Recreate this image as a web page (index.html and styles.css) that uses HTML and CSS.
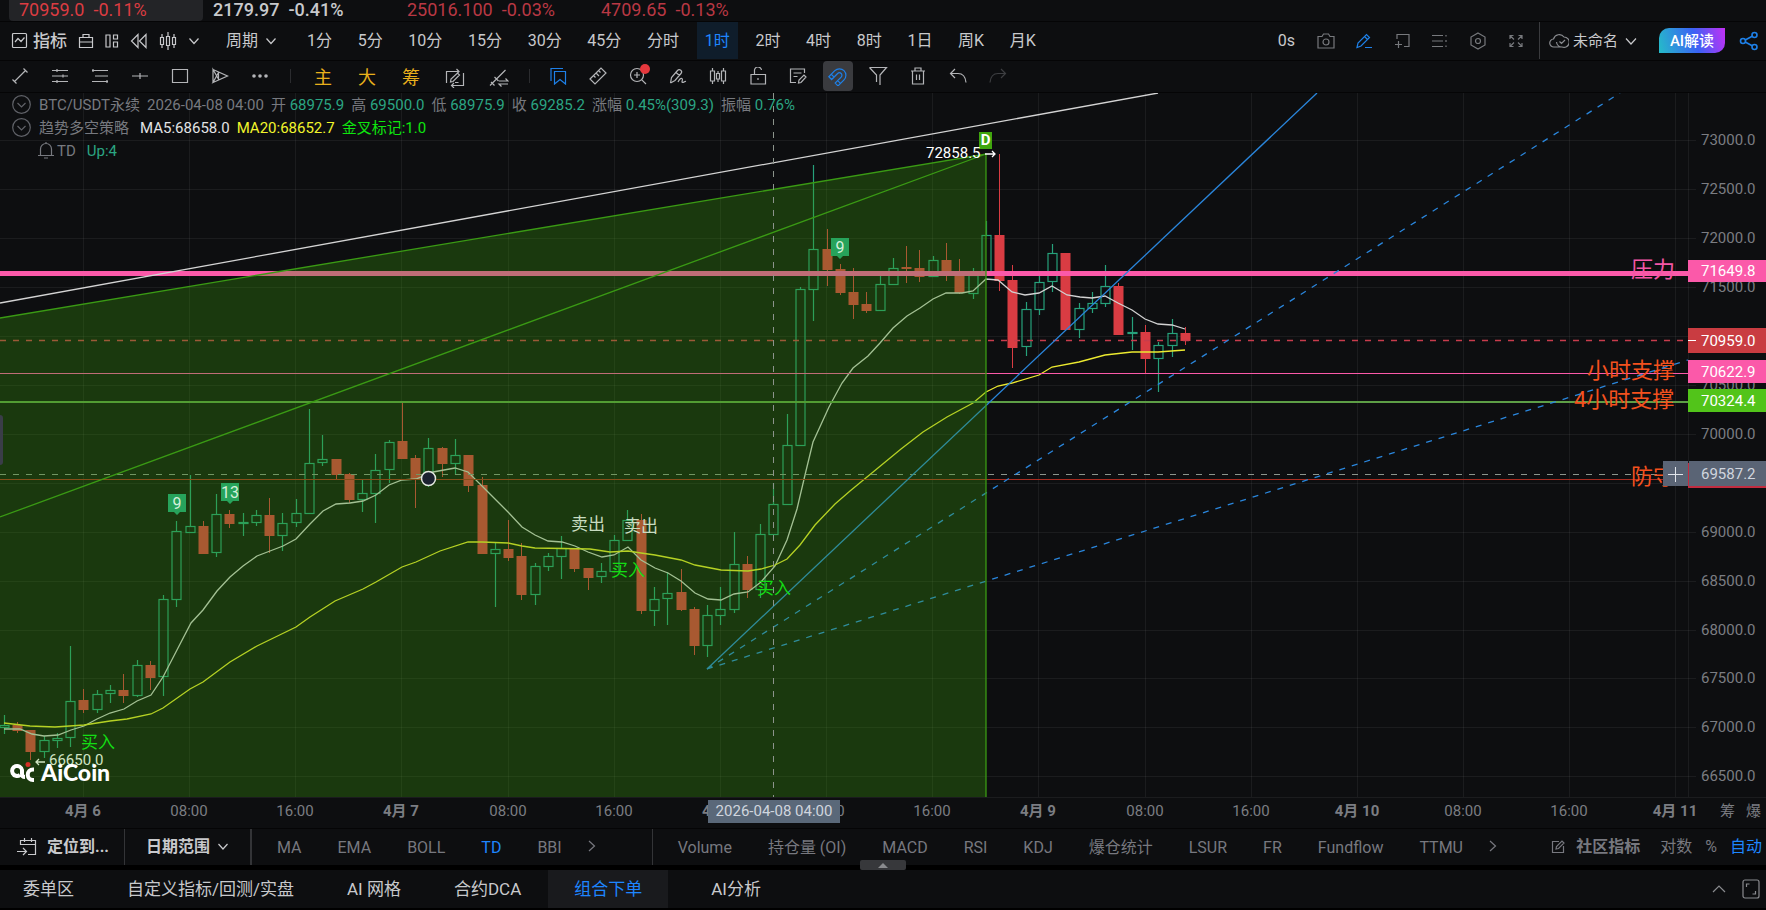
FILE: index.html
```html
<!DOCTYPE html>
<html lang="zh-CN">
<head>
    <meta charset="UTF-8">
    <meta name="viewport" content="width=device-width, initial-scale=1.0">
    <title>AiCoin - BTC/USDT永续</title>
    <link rel="stylesheet" href="styles.css">
</head>
<body>
    <header class="ticker">
        <a class="tick active down" href="#"><span>70959.0</span><span>-0.11%</span></a>
        <a class="tick flat" href="#"><span>2179.97</span><span>-0.41%</span></a>
        <a class="tick dim" href="#"><span>25016.100</span><span>-0.03%</span></a>
        <a class="tick dim" href="#"><span>4709.65</span><span>-0.13%</span></a>
    </header>

    <nav class="period-bar">
        <div class="tools">
            <button class="indicator-btn">
                <svg class="icon" width="17" height="17" viewBox="0 0 17 17"><rect x="1.500" y="1.500" width="14" height="14" rx="1"/><path d="M4 10l3-3.500 3 3 3.500-4"/></svg>
                指标
            </button>
            <button aria-label="工具箱"><svg class="icon" width="16" height="16" viewBox="0 0 16 16"><path d="M1.500 4.500h13v10h-13zM1.500 9h13M5 4.500v-3h6v3"/></svg></button>
            <button aria-label="布局"><svg class="icon" width="14" height="16" viewBox="0 0 14 16"><path d="M1 2h4v12H1zM8.500 2h4v4h-4zM8.500 9h4v5h-4z"/></svg></button>
            <button aria-label="回放"><svg class="icon" width="18" height="16" viewBox="0 0 18 16"><path d="M8 1.500v13L1.500 8zM16 1.500v13L9.500 8z"/></svg></button>
            <button aria-label="K线样式"><svg class="icon" width="18" height="18" viewBox="0 0 18 18"><path d="M3 2v3M3 13v3M1.500 5.500h3v7h-3zM9 0v4M9 14v4M7.500 4.500h3v9h-3zM15 2v3M15 13v3M13.500 5.500h3v7h-3z"/></svg></button>
            <button aria-label="展开"><svg class="icon" width="12" height="12" viewBox="0 0 12 12"><path d="M1.500 3.500L6 8.500l4.500-5"/></svg></button>
        </div>
        <label class="drop">
            <select aria-label="周期"><option>周期</option></select>
            <svg class="icon" width="12" height="12" viewBox="0 0 12 12"><path d="M1.500 3.500L6 8.500l4.500-5"/></svg>
        </label>
        <div class="periods">
            <button>1分</button>
            <button>5分</button>
            <button>10分</button>
            <button>15分</button>
            <button>30分</button>
            <button>45分</button>
            <button>分时</button>
            <button class="active">1时</button>
            <button>2时</button>
            <button>4时</button>
            <button>8时</button>
            <button>1日</button>
            <button>周K</button>
            <button>月K</button>
        </div>
        <div class="actions">
            <button class="delay">0s</button>
            <button aria-label="截图"><svg class="icon" width="18" height="18" viewBox="0 0 18 18"><path d="M1 4.500h4l1.500-2.500h5L13 4.500h4V16H1z"/><circle cx="9" cy="10" r="3"/></svg></button>
            <button class="blue" aria-label="画线"><svg class="icon" width="18" height="18" viewBox="0 0 18 18"><path d="M2 15.500l1-4.500 8.500-8.500 3 3L6 14zM9.500 4.500l3 3M10 15.500h7"/></svg></button>
            <button aria-label="新增窗口"><svg class="icon" width="18" height="18" viewBox="0 0 18 18"><path d="M4 7V2.500h12v12h-5M5.500 9v7M2 12.500h7"/></svg></button>
            <button aria-label="列表"><svg class="icon" width="18" height="18" viewBox="0 0 18 18"><path d="M1 3.500h11M1 9h11M1 14.500h11M15 3v1.500M15 8v2M15 13.500V15"/></svg></button>
            <button aria-label="设置"><svg class="icon" width="18" height="18" viewBox="0 0 18 18"><path d="M9 1l7 4v8l-7 4-7-4V5z"/><circle cx="9" cy="9" r="2.500"/></svg></button>
            <button aria-label="全屏"><svg class="icon" width="18" height="18" viewBox="0 0 18 18"><path d="M3 7V3.500h3.500M3.500 4L7 7.500M11.500 3.500H15V7M14.500 4L11 7.500M3 11v3.500h3.500M3.500 14L7 10.500M11.500 14.500H15V11M14.500 14L11 10.500"/></svg></button>
        </div>
        <div class="account">
            <svg class="icon cloud" width="20" height="16" viewBox="0 0 20 16"><path d="M7.500 14H5a4 4 0 0 1-.5-8 6 6 0 0 1 10.500-2A5.200 5.200 0 1 1 13 14zM13 14a5.500 5.500 0 0 1-5.500-5M10.500 8.500l2 2L16 7"/></svg>
            <label class="drop layout-name">
                <select aria-label="布局名称"><option>未命名</option></select>
                <svg class="icon" width="12" height="12" viewBox="0 0 12 12"><path d="M1 3.500L6 9l5-5.500"/></svg>
            </label>
            <button class="ai-btn">AI解读</button>
            <button class="blue" aria-label="分享"><svg class="icon share" width="20" height="20" viewBox="0 0 20 20"><circle cx="4" cy="10" r="2.500"/><circle cx="15.500" cy="4" r="2.500"/><circle cx="15.500" cy="16" r="2.500"/><path d="M6.200 9l7-3.800M6.200 11l7 3.800"/></svg></button>
        </div>
    </nav>

    <nav class="draw-bar">
        <button aria-label="线段"><svg class="icon" width="18" height="18" viewBox="0 0 18 18"><path d="M3.500 14.500l11-11M1.500 12.500l4 4M12.500 1.500l4 4"/></svg></button>
        <button aria-label="平行线"><svg class="icon" width="18" height="18" viewBox="0 0 18 18"><path d="M1 3.500h16M1 9h16M1 14.500h16M6 2v3M12 7.500v3M6 13v3"/></svg></button>
        <button aria-label="斐波那契"><svg class="icon" width="18" height="18" viewBox="0 0 18 18"><path d="M1 3.500h16M4 9h13M1 14.500h16M2 2v3M16 13v3"/></svg></button>
        <button aria-label="水平线"><svg class="icon" width="18" height="18" viewBox="0 0 18 18"><path d="M1 9h16M9 6v6"/></svg></button>
        <button aria-label="矩形"><svg class="icon" width="18" height="18" viewBox="0 0 18 18"><path d="M1.500 2.500h15v13h-15z"/></svg></button>
        <button aria-label="形态"><svg class="icon" width="18" height="18" viewBox="0 0 18 18"><path d="M2 15.500V2.500L8 13M2 2.500L16.500 9 2 15.500 7.500 5.500V13"/></svg></button>
        <button aria-label="更多"><svg class="icon solid" width="18" height="18" viewBox="0 0 18 18"><circle cx="3" cy="9" r="1.800"/><circle cx="9" cy="9" r="1.800"/><circle cx="15" cy="9" r="1.800"/></svg></button>
        <span class="sep"></span>
        <button class="wide gold">主</button>
        <button class="wide gold">大</button>
        <button class="wide gold">筹</button>
        <button class="wide" aria-label="循环画线"><svg class="icon" width="20" height="20" viewBox="0 0 20 20"><path d="M1.500 15V3.500h12M11.500 1l2.500 2.500L11.500 6M18.500 5v12.500h-12M9 15l-2.500 2.500L9 20M5.500 14l.5-3L12.500 5l2 2L8 13.500zM10 14.500h3.500"/></svg></button>
        <button class="wide" aria-label="切换线段"><svg class="icon" width="20" height="20" viewBox="0 0 20 20"><path d="M1 17.500L16.500 2M2 14l3.500 3.500M5.500 9l4 4M10 13h9l-2.500-2.500M19 16h-9l2.500 2.500"/></svg></button>
        <span class="sep"></span>
        <button class="blue" aria-label="书签"><svg class="icon" width="18" height="18" viewBox="0 0 18 18"><path d="M5.500 4.500h11v12.500l-5.500-4.500-5.500 4.500zM2 14V1.500h12"/></svg></button>
        <button aria-label="测量"><svg class="icon" width="18" height="18" viewBox="0 0 18 18"><path d="M1 12L12 1l5 5L6 17zM4.500 8.500l2 2M7 6l3 3M9.500 3.500l2 2"/></svg></button>
        <button class="has-dot" aria-label="放大"><svg class="icon" width="18" height="18" viewBox="0 0 18 18"><circle cx="8" cy="8" r="6.500"/><path d="M12.800 12.800L17 17M8 5v6M5 8h6"/></svg></button>
        <button aria-label="画笔"><svg class="icon" width="18" height="18" viewBox="0 0 18 18"><path d="M1.500 16l1-5.500 6-7a2 2 0 0 1 3.500 3L6 13.500 1.500 16M7 5.500l3.500 3M9 15c1-2 2.500-4 4-3.500s-1 4 .5 4 2-1.500 3.500-1"/></svg></button>
        <button aria-label="K线"><svg class="icon" width="18" height="18" viewBox="0 0 18 18"><path d="M3.500 1v3M3.500 14v3M1.500 4h4v10h-4zM9 4v2.500M9 12v3M7.500 6.500h3V12h-3zM14.500 1v3M14.500 14v3M12.500 4h4v10h-4z"/></svg></button>
        <button aria-label="锁定"><svg class="icon" width="18" height="18" viewBox="0 0 18 18"><path d="M2 7.500h14.500V17H2zM5.500 7.500V4a3.500 3.500 0 0 1 7-1M9 11v2"/></svg></button>
        <button aria-label="备注"><svg class="icon" width="18" height="18" viewBox="0 0 18 18"><path d="M15.500 6V2h-14v13.500H7M4.500 6h8M4.500 9.500h4M9.500 16l.5-3 5-5 2 2-5 5.500z"/></svg></button>
        <button class="blue pressed" aria-label="磁铁"><svg class="icon" width="20" height="20" viewBox="0 0 20 20"><path d="M4 17V8.500a6.500 6.500 0 0 1 13 0V17h-4V8.500a2.500 2.500 0 0 0-5 0V17zM4 13.500h4M13 13.500h4" transform="rotate(45 10 10)"/></svg></button>
        <button aria-label="过滤"><svg class="icon" width="20" height="20" viewBox="0 0 20 20"><path d="M1.500 1.500h17l-6.500 7.500V19M1.500 1.500L8.500 9v7"/></svg></button>
        <button aria-label="删除"><svg class="icon" width="18" height="18" viewBox="0 0 18 18"><path d="M2 4h14M3.500 4v13h11V4M6 4V1h6v3M7.500 7.500V13M10.500 7.500V13"/></svg></button>
        <button aria-label="撤销"><svg class="icon" width="18" height="18" viewBox="0 0 18 18"><path d="M6 2L1.500 6.500 6 11M1.500 6.500H9c5 0 7.500 3.500 8 9"/></svg></button>
        <button class="off" aria-label="重做"><svg class="icon" width="18" height="18" viewBox="0 0 18 18"><path d="M12 2l4.500 4.500L12 11M16.500 6.500H9c-5 0-7.500 3.500-8 9"/></svg></button>
    </nav>

    <main class="chart">
        <svg id="plot" viewBox="0 93 1766 735" preserveAspectRatio="xMinYMin slice"></svg>
        <div class="legend">
            <p>
                <svg class="icon fold" width="19" height="19" viewBox="0 0 19 19"><circle cx="9.500" cy="9.500" r="8.800"/><path d="M5.500 8l4 4 4-4"/></svg>
                <span class="name">BTC/USDT永续</span>
                <span>2026-04-08 04:00</span>
                <span>开 <b>68975.9</b></span>
                <span>高 <b>69500.0</b></span>
                <span>低 <b>68975.9</b></span>
                <span>收 <b>69285.2</b></span>
                <span>涨幅 <b>0.45%(309.3)</b></span>
                <span>振幅 <b>0.76%</b></span>
            </p>
            <p>
                <svg class="icon fold" width="19" height="19" viewBox="0 0 19 19"><circle cx="9.500" cy="9.500" r="8.800"/><path d="M5.500 8l4 4 4-4"/></svg>
                <span class="strategy">趋势多空策略</span>
                <span class="ma5">MA5:68658.0</span>
                <span class="ma20">MA20:68652.7</span>
                <span class="cross">金叉标记:1.0</span>
            </p>
            <p class="td-row">
                <svg class="icon" width="18" height="17" viewBox="0 0 18 17"><path d="M1 13.500h16M3.500 13.500V7a5.500 5.500 0 0 1 11 0v6.500M9 1.500V0M7 16h4"/></svg>
                <span>TD</span>
                <b>Up:4</b>
            </p>
        </div>
    </main>

    <nav class="indicator-bar">
        <button class="goto">
            <svg class="icon" width="20" height="20" viewBox="0 0 20 20"><path d="M3.500 8V3.500h15v14H11M3.500 7.500h15M7.500 1v4M14.500 1v4M0 14.500h9M6 11l3.500 3.500L6 18"/></svg>
            定位到...
        </button>
        <label class="drop range">
            <select aria-label="日期范围"><option>日期范围</option></select>
            <svg class="icon" width="12" height="12" viewBox="0 0 12 12"><path d="M1.500 3L6 8l4.500-5"/></svg>
        </label>
        <div class="group main-group">
            <button>MA</button>
            <button>EMA</button>
            <button>BOLL</button>
            <button class="active">TD</button>
            <button>BBI</button>
            <button class="next" aria-label="更多主图指标"><svg class="icon" width="8" height="14" viewBox="0 0 8 14"><path d="M1 2l5.500 5L1 12"/></svg></button>
        </div>
        <div class="group sub-group">
            <button>Volume</button>
            <button>持仓量 (OI)</button>
            <button>MACD</button>
            <button>RSI</button>
            <button>KDJ</button>
            <button>爆仓统计</button>
            <button>LSUR</button>
            <button>FR</button>
            <button>Fundflow</button>
            <button>TTMU</button>
            <button class="next" aria-label="更多副图指标"><svg class="icon" width="8" height="14" viewBox="0 0 8 14"><path d="M1 2l5.500 5L1 12"/></svg></button>
        </div>
        <div class="scale">
            <button class="community">
                <svg class="icon" width="14" height="14" viewBox="0 0 14 14"><path d="M8 1.500H1.500v11h11V6M5 9l.5-2.500L11 1l2 2-5.500 5.500z"/></svg>
                社区指标
            </button>
            <button>对数</button>
            <button>%</button>
            <button class="active">自动</button>
        </div>
        <button class="pull" aria-label="展开面板"></button>
    </nav>

    <footer class="panel-tabs">
        <button>委单区</button>
        <button>自定义指标/回测/实盘</button>
        <button>AI 网格</button>
        <button>合约DCA</button>
        <button class="active">组合下单</button>
        <button class="analysis">AI分析</button>
        <div class="panel-actions">
            <button aria-label="收起"><svg class="icon" width="14" height="10" viewBox="0 0 14 10"><path d="M1 8l6-6 6 6"/></svg></button>
            <button aria-label="最大化"><svg class="icon" width="18" height="20" viewBox="0 0 18 20"><rect x="1" y="1" width="16" height="18" rx="2"/><path d="M4.500 8V5h3M13.500 12v3h-3"/></svg></button>
        </div>
    </footer>

    <script src="chart.js"></script>
</body>
</html>
```
FILE: styles.css
```css
* {
    box-sizing: border-box;
}
body {
    margin: 0;
    height: 100vh;
    display: flex;
    flex-direction: column;
    overflow: hidden;
    background: #0d0e10;
    color: #c8c9cc;
    font-family: Roboto, "Noto Sans CJK SC", sans-serif;
    font-size: 16px;
    line-height: 20px;
}
button, select {
    padding: 0;
    border: none;
    background: none;
    color: inherit;
    font: inherit;
    white-space: nowrap;
    cursor: pointer;
}
select {
    appearance: none;
}
a {
    color: inherit;
    text-decoration: none;
}
.icon {
    display: block;
    flex: none;
    fill: none;
    stroke: currentColor;
    stroke-width: 1.2;
}
.icon.solid {
    fill: currentColor;
    stroke: none;
}
.blue {
    color: #1e80e8;
}

/* ticker */
.ticker {
    display: flex;
    flex: none;
    height: 21px;
    padding-left: 9px;
    font-size: 18px;
}
.tick {
    display: flex;
    gap: 9px;
    width: 194px;
    padding-left: 10px;
    border-radius: 0 0 4px 4px;
}
.tick.active {
    background: #232427;
}
.tick.down {
    color: #dc3c42;
}
.tick.flat {
    font-weight: 500;
}
.tick.dim {
    color: #b93844;
}

/* periods */
.period-bar {
    display: flex;
    flex: none;
    align-items: center;
    height: 40px;
    padding-bottom: 1px;
    border-top: 1px solid #050506;
    border-bottom: 1px solid #050506;
}
.tools {
    display: flex;
    align-items: center;
    gap: 11px;
    padding-left: 11px;
}
.indicator-btn {
    display: flex;
    align-items: center;
    gap: 5px;
    font-size: 17px;
    font-weight: 500;
}
.drop {
    display: flex;
    align-items: center;
    gap: 6px;
}
.period-bar > .drop {
    margin-left: 26px;
}
.periods {
    display: flex;
    align-self: stretch;
    justify-content: space-between;
    width: 745px;
    margin-left: 22px;
}
.periods button {
    padding: 0 8px;
}
.periods .active {
    background: #0f1d2b;
    color: #1e86ff;
}
.actions {
    display: flex;
    align-items: center;
    gap: 20px;
    margin-left: auto;
    padding-right: 14px;
    color: #77797d;
}
.actions .blue {
    color: #1e80e8;
}
.delay {
    margin-right: 2px;
    color: #c8c9cc;
}
.account {
    display: flex;
    align-self: stretch;
    align-items: center;
    padding: 0 7px 0 9px;
    border-left: 1px solid #3a3b3e;
}
.cloud {
    color: #8b8d91;
}
.layout-name {
    margin: 0 22px 0 4px;
    font-size: 15px;
}
.ai-btn {
    width: 66px;
    height: 25px;
    margin-right: 14px;
    border-radius: 10px 0 10px 0;
    background: linear-gradient(75deg, #25bcc8, #3a62f5 55%, #c42ff5);
    color: #fff;
    font-size: 15px;
    font-weight: 500;
}
.share {
    stroke-width: 1.6;
}

/* drawing tools */
.draw-bar {
    display: flex;
    flex: none;
    align-items: center;
    height: 32px;
    padding-bottom: 1px;
    border-bottom: 1px solid #050506;
    color: #b4b5b8;
}
.draw-bar button {
    display: flex;
    align-items: center;
    justify-content: center;
    width: 40px;
    height: 30px;
}
.draw-bar .wide {
    width: 44px;
    padding-top: 3px;
}
.draw-bar .gold {
    color: #e8b01c;
    font-size: 18px;
}
.sep {
    width: 1px;
    height: 14px;
    margin: 0 10px;
    background: #2b2c2f;
}
.wide + .sep {
    margin: 0 8px;
}
.draw-bar .pressed {
    width: 30px;
    margin: 0 5px;
    border-radius: 4px;
    background: #3a3b3f;
}
.has-dot {
    position: relative;
}
.has-dot::after {
    content: "";
    position: absolute;
    top: 3px;
    right: 8px;
    width: 10px;
    height: 10px;
    border-radius: 50%;
    background: #e5383d;
}
.draw-bar .off {
    color: #3d3e41;
}

/* chart */
.chart {
    position: relative;
    flex: 1;
    min-height: 0;
}
#plot {
    display: block;
    width: 100%;
    height: 100%;
}
.legend {
    position: absolute;
    top: 0;
    left: 12px;
    color: #77797f;
    font-size: 15px;
}
.legend p {
    display: flex;
    align-items: center;
    gap: 7px;
    height: 23px;
    margin: 0;
    white-space: nowrap;
}
.legend b {
    color: #2ba583;
    font-weight: 400;
}
.legend .fold {
    color: #606268;
}
.legend .name, .strategy {
    margin-left: 1px;
}
.strategy {
    margin-right: 4px;
}
.ma5 {
    color: #e2e3e5;
}
.ma20 {
    color: #f2f52c;
}
.cross {
    color: #0ee60e;
}
.legend .td-row {
    gap: 2px;
    padding-left: 25px;
}
.td-row b {
    margin-left: 9px;
}
.grid {
    stroke: #fff;
    stroke-opacity: 0.06;
}
.up {
    fill: none;
    stroke: #26a17b;
    stroke-width: 1.2;
}
.down {
    fill: #d93c43;
    stroke: #d93c43;
}
.line {
    fill: none;
    stroke-width: 1.3;
}
.ma-fast {
    stroke: #d2d2d2;
}
.ma-slow {
    stroke: #ecea30;
}
.fan {
    stroke: #2a86dc;
}
.trend {
    stroke: #d4d4d4;
}
.area {
    fill: #3a9b0a;
    fill-opacity: 0.31;
}
.edge {
    stroke: #3a9a14;
}
.cursor-line {
    stroke: #8c948c;
    stroke-width: 1;
    stroke-dasharray: 6 7;
}
.axis-text {
    fill: #7b7d82;
    font-size: 15px;
}
.day {
    font-weight: 700;
}
.tag-text {
    fill: #fff;
    font-size: 15px;
}
.cursor-text {
    fill: #d0d5de;
}
.note {
    font-size: 22px;
}
.mark {
    font-size: 17px;
}
.count {
    fill: #d5f0dc;
    font-size: 16px;
}
.pivot {
    fill: #fff;
    font-size: 15px;
}
.brand {
    fill: #fff;
    font-family: Lato, sans-serif;
    font-size: 23px;
    font-weight: 900;
}
.middle {
    text-anchor: middle;
}

/* indicators */
.indicator-bar {
    position: relative;
    display: flex;
    flex: none;
    align-items: center;
    height: 37px;
    border-top: 1px solid #050506;
    color: #77787f;
}
.goto, .range {
    align-self: stretch;
    color: #c8c9cc;
    font-weight: 700;
}
.goto {
    display: flex;
    align-items: center;
    gap: 10px;
    padding: 0 15px 0 17px;
}
.range {
    padding: 0 21px;
    border-left: 1px solid #333437;
    border-right: 2px solid #333437;
}
.group {
    display: flex;
    align-items: center;
    align-self: stretch;
    gap: 36px;
    padding-top: 2px;
}
.main-group {
    padding-left: 25px;
}
.sub-group {
    margin-left: 56px;
    padding-left: 25px;
    border-left: 1px solid #333437;
}
.group .next {
    margin: 0 0 4px -10px;
}
.indicator-bar .active {
    color: #1e86ff;
}
.scale {
    display: flex;
    align-items: center;
    gap: 13px;
    margin-left: auto;
    padding-right: 4px;
}
.community {
    display: flex;
    align-items: center;
    gap: 11px;
    margin-right: 7px;
    font-weight: 700;
}
.pull {
    position: absolute;
    bottom: -5px;
    left: 860px;
    width: 46px;
    height: 10px;
    border-radius: 2px;
    background: #37383b;
}
.pull::after {
    content: "";
    display: block;
    width: 0;
    margin: 0 auto;
    border: 5px solid transparent;
    border-top: none;
    border-bottom-color: #8a8b8e;
}

/* bottom tabs */
.panel-tabs {
    display: flex;
    flex: none;
    gap: 1px;
    height: 45px;
    border-top: 5px solid #000;
    border-bottom: 2px solid #000;
    font-size: 17px;
}
.panel-tabs > button {
    padding: 0 26px;
}
.panel-tabs > button:first-child {
    padding-left: 23px;
}
.panel-tabs .active {
    background: #191a1d;
    color: #1e86ff;
}
.panel-tabs .analysis {
    margin-left: 16px;
}
.panel-actions {
    display: flex;
    align-items: center;
    gap: 16px;
    margin-left: auto;
    padding-right: 6px;
    color: #8a8b8f;
}
```
FILE: chart.js
```javascript
const plot = document.getElementById("plot");
const STEP = 13.27;
const FIRST = 4.3;
const BOTTOM = 797;
const AXIS = 1688;

// direction, high, body top, body bottom, low
const candles = `
u 715 725 728 734|d 722 725 731 733|d 730 730 752 760|u 736 740 752 758|u 733 738 741 748|u 646 701 738 747
d 689 700 710 713|u 690 694 710 713|u 685 690 694 703|d 674 690 696 703|u 660 665 696 697|d 661 665 678 690
u 595 599 677 696|u 521 531 600 607|u 475 526 533 533|d 521 526 554 554|u 494 514 553 557|d 510 514 524 528
u 513 522 523 536|u 510 515 523 526|d 498 515 536 553|u 513 523 536 551|u 499 513 523 527|u 409 463 514 514
u 435 459 463 466|d 459 459 475 479|d 473 474 500 503|u 480 493 500 512|u 454 470 494 523|u 440 442 470 483
d 402 441 459 459|d 455 458 479 508|u 438 448 473 487|d 447 448 464 477|u 439 455 464 475|d 455 455 486 492
d 477 485 554 554|u 543 549 554 607|d 520 549 558 561|d 543 556 595 600|u 563 566 595 605|u 553 556 567 571
u 536 548 557 579|d 548 548 569 572|d 568 568 578 590|u 563 571 577 583|u 535 540 572 572|u 510 520 541 541
d 514 520 611 614|u 587 599 611 626|u 572 593 599 625|d 569 592 610 611|d 607 609 646 655|u 605 615 646 657
u 587 609 616 625|u 532 564 610 613|d 556 564 590 598|u 524 534 590 598|u 483 504 535 535|u 414 445 505 505
u 287 289 446 446|u 165 249 290 321|d 229 249 270 286|d 264 269 293 295|d 268 292 305 319|d 292 304 311 313
u 275 284 311 311|u 258 268 285 285|d 246 267 269 283|d 250 268 277 282|u 256 260 277 277|d 243 260 272 281
d 259 271 293 294|u 268 275 294 299|u 221 235 275 275|d 154 235 281 291|d 265 280 348 368|u 302 309 347 356
u 272 282 310 315|u 244 253 282 292|d 253 253 330 330|u 303 308 330 338|u 292 303 309 313|u 265 286 304 307
d 283 286 335 335|u 317 332 334 350|d 325 332 359 373|u 342 345 359 392|u 319 333 346 357|d 327 333 341 345
`.trim().split(/[|\n]/).map(row => row.split(" "));

const fast = "4,729 20,729 32,734 44,736 58,735 71,730 84,726 97,719 110,713 124,709 137,701 151,695 163,677 178,648 191,623 203,610 217,591 230,577 243,566 257,556 270,551 283,546 296,539 310,524 323,511 336,504 350,503 363,501 376,495 389,485 402,480 416,479 433,472 455,468 468,472 482,486 500,504 508,512 522,527 535,535 548,541 562,542 575,546 588,552 602,557 614,555 628,547 641,560 655,568 668,573 681,581 695,593 708,599 721,600 734,594 748,592 761,582 775,566 787,540 797,509 805,475 813,442 829,407 842,383 853,368 868,356 880,343 893,328 907,316 920,308 933,299 946,293 962,293 973,291 986,279 998,280 1012,292 1025,295 1039,293 1052,286 1067,295 1080,297 1092,298 1105,296 1118,303 1132,310 1145,319 1158,324 1172,325 1185,329";
const slow = "4,723 30,726 55,727 84,725 110,721 127,719 151,714 163,708 190,689 203,682 230,662 257,646 296,627 310,617 335,601 363,589 376,582 402,567 416,562 440,551 468,542 482,542 508,543 522,546 535,548 590,549 610,552 628,551 641,553 655,555 681,560 695,565 721,570 748,571 761,569 775,565 787,559 800,545 815,525 835,504 850,491 901,449 923,432 947,417 973,403 986,392 998,386 1012,383 1039,375 1052,367 1079,362 1105,355 1132,352 1158,352 1185,350";

let out = "";
const line = (x1, y1, x2, y2, attrs) => {
    out += `<line x1="${x1}" y1="${y1}" x2="${x2}" y2="${y2}" ${attrs}/>`;
};
const rect = (x, y, w, h, attrs) => {
    out += `<rect x="${x}" y="${y}" width="${w}" height="${h}" ${attrs}/>`;
};
const text = (x, y, str, cls, fill) => {
    out += `<text x="${x}" y="${y}" dy="0.35em" class="${cls}" ${fill ? `style="fill:${fill}"` : ""}>${str}</text>`;
};

// grid and axis labels
const times = ["4月 6", "08:00", "16:00", "4月 7", "08:00", "16:00", "4月 8", "08:00", "16:00", "4月 9", "08:00", "16:00", "4月 10", "08:00", "16:00", "4月 11"];
times.forEach((label, i) => {
    const x = Math.round(83 + i * 106.15);
    line(x + 0.5, 93, x + 0.5, BOTTOM, 'class="grid"');
    text(x, 811, label, "axis-text middle" + (label.includes("月") ? " day" : ""));
});
for (let price = 73000, y = 140; price >= 66500; price -= 500, y += 48.95) {
    line(0, Math.round(y) + 0.5, 1696, Math.round(y) + 0.5, 'class="grid"');
    text(1701, Math.round(y), price + ".0", "axis-text");
}
line(AXIS + 0.5, 93, AXIS + 0.5, BOTTOM, 'class="grid"');
line(0, BOTTOM + 0.5, 1766, BOTTOM + 0.5, 'class="grid"');
text(1720, 811, "筹", "axis-text");
text(1746, 811, "爆", "axis-text");

// candles
candles.forEach(([dir, high, top, bottom, low], i) => {
    const x = Math.floor(FIRST + i * STEP) + 0.5;
    const cls = dir === "u" ? "up" : "down";
    out += `<path class="${cls}" d="M${x} ${high}V${top}M${x} ${bottom}V${low}"/>`;
    rect(x - 4.5, +top + 0.5, 9, Math.max(bottom - top - 1, 1), `class="${cls}"`);
});
out += `<polyline class="line ma-fast" points="${fast}"/><polyline class="line ma-slow" points="${slow}"/>`;

// support and resistance
line(0, 273.5, AXIS, 273.5, 'stroke="#fb59a9" stroke-width="5"');
line(0, 340.5, AXIS, 340.5, 'stroke="#c83c4c" stroke-width="1.500" stroke-dasharray="6 7"');
line(0, 373.5, AXIS, 373.5, 'stroke="#fb59a9"');
line(0, 402, AXIS, 402, 'stroke="#5d9e46" stroke-width="2"');
line(0, 479.5, AXIS, 479.5, 'stroke="#a82c20"');
line(0, 474.5, AXIS, 474.5, 'class="cursor-line"');
text(1631, 269, "压力", "note", "#f457a6");
text(1587, 370, "小时支撑", "note", "#f4511e");
text(1574, 399, "4小时支撑", "note", "#f4511e");
text(1631, 476, "防守", "note", "#f4511e");

// gann fan
line(707, 669, 1317, 93, 'class="line fan"');
line(707, 669, 1620, 93, 'class="line fan" stroke-dasharray="6 7"');
line(707, 669, AXIS, 360, 'class="line fan" stroke-dasharray="6 7"');

// rising wedge
out += `<path class="area" d="M0 318L986 154V${BOTTOM}H0z"/>`;
out += `<path class="line edge" d="M0 318L986 154V${BOTTOM}M0 517L986 154"/>`;
line(0, 303, 1158, 93, 'class="line trend"');
line(773.5, 93, 773.5, BOTTOM, 'class="cursor-line"');

// TD counts
[[177, 494, "9"], [230, 483, "13"], [840, 238, "9"]].forEach(([x, y, n]) => {
    out += `<path fill="#27a35b" d="M${x - 9} ${y}h18v18h-6l-3 3-3-3h-6z"/>`;
    text(x, y + 9, n, "count middle");
});
rect(979, 132, 13, 17, 'fill="#3fa50e"');
text(985.5, 140, "D", "pivot middle day");

// signals
text(81, 742, "买入", "mark", "#14de14");
text(611, 570, "买入", "mark", "#14de14");
text(757, 588, "买入", "mark", "#14de14");
text(571, 524, "卖出", "mark", "#c8dcc0");
text(624, 526, "卖出", "mark", "#c8dcc0");
text(926, 153, "72858.5", "pivot");
out += '<path class="line" stroke="#fff" d="M985 154h10M992 151l3 3-3 3"/>';
text(49, 760, "66650.0", "pivot", "#d0e4c4");
out += '<path class="line" stroke="#d0e4c4" d="M45 762H36M39 759l-3 3 3 3"/>';

// brand
out += '<g fill="none" stroke="#fff" stroke-width="4"><path d="M20 775a5 5 0 1 1 2-5v4q0 3 3 3"/><path d="M34 769.500h-1a5 5 0 0 0 0 10.500h1"/></g><circle cx="28" cy="764.500" r="2.500" fill="#d33026"/>';
text(41, 773, "AiCoin", "brand");

out += '<circle cx="428.500" cy="478.500" r="7" fill="#1b2130" stroke="#e4e8e0" stroke-width="1.500"/>';
rect(-3, 415, 6, 50, 'rx="3" fill="#3a3d48"');

// price tags
[[260, 22, "71649.8", "#fb59a9"], [328, 25, "70959.0", "#c93c41"], [360, 23, "70622.9", "#fb59a9"], [389, 23, "70324.4", "#52c41a"]].forEach(([y, h, label, color]) => {
    rect(AXIS, y, 78, h, `fill="${color}"`);
    text(1701, y + h / 2, label, "tag-text");
});
line(AXIS, 340.5, 1696, 340.5, 'stroke="#fff"');
rect(AXIS, 463, 78, 25, 'fill="#c22c40"');
rect(1663, 461, 25, 25, 'fill="#5a6475"');
rect(AXIS + 1, 461, 77, 25, 'fill="#5a6475"');
out += '<path stroke="#e0e4ea" d="M1668 474.500h15M1675.500 467v15"/>';
text(1701, 474, "69587.2", "tag-text cursor-text");
rect(708, 800, 132, 23, 'fill="#5a6879"');
text(774, 811, "2026-04-08 04:00", "tag-text cursor-text middle");

plot.innerHTML = out;
```
